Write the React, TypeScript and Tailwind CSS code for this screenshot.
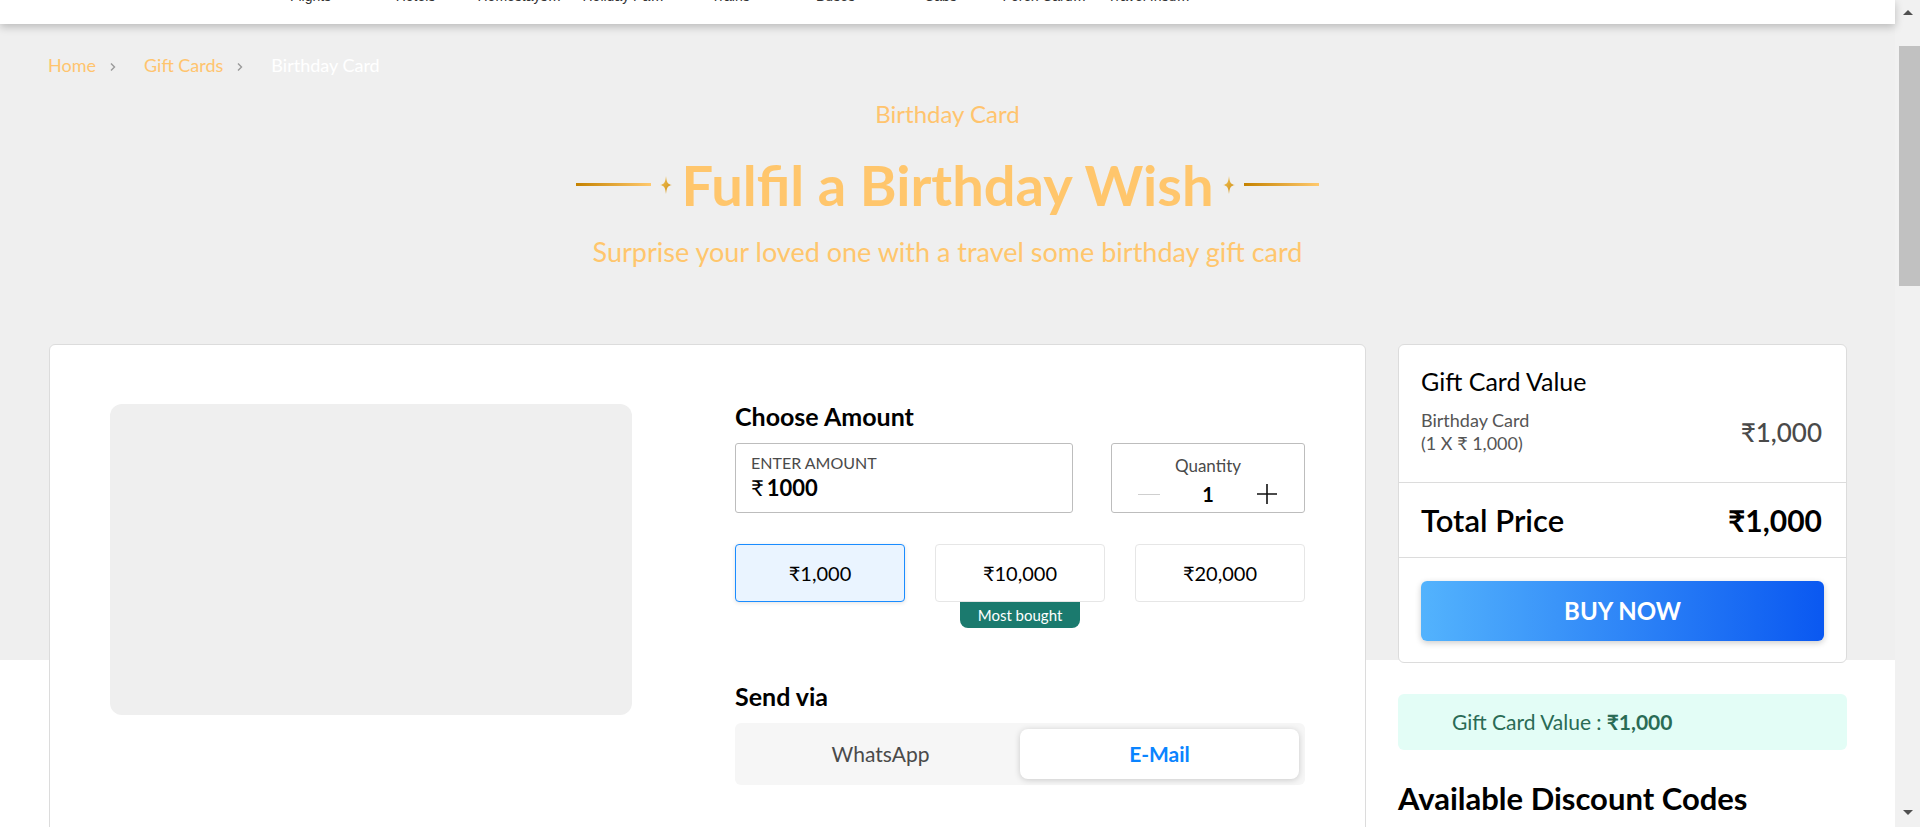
import React from 'react';

const NAV = ['Flights', 'Hotels', 'Homestays & Villas', 'Holiday Packages', 'Trains', 'Buses', 'Cabs', 'Forex Card & Currency', 'Travel Insurance'];

function Star() {
  return (
    <svg width="12" height="18" viewBox="0 0 12 18" aria-hidden>
      <defs>
        <linearGradient id="sg" x1="0" y1="0" x2="1" y2="1">
          <stop offset="0" stopColor="#f7c75a" />
          <stop offset="1" stopColor="#c98a12" />
        </linearGradient>
      </defs>
      <path d="M6 0 C6.6 6 7.5 8.2 12 9 C7.5 9.8 6.6 12 6 18 C5.4 12 4.5 9.8 0 9 C4.5 8.2 5.4 6 6 0 Z" fill="url(#sg)" />
    </svg>
  );
}

function Chevron() {
  return (
    <svg width="8" height="10" viewBox="0 0 8 10" aria-hidden className="mt-[4px]">
      <path d="M2 1.5 L5.5 5 L2 8.5" fill="none" stroke="#9a9a9a" strokeWidth="1.4" />
    </svg>
  );
}

function Scrollbar() {
  return (
    <div className="flex h-full w-[25px] shrink-0 flex-col items-center bg-[#f1f1f1]">
      <div className="mt-[10px] h-0 w-0 border-x-[5px] border-b-[5px] border-x-transparent border-b-[#505050]" />
      <div className="ml-[4px] mt-[31px] h-[240px] w-[21px] bg-[#c1c1c1]" />
      <div className="flex-1" />
      <div className="mb-[12px] h-0 w-0 border-x-[5px] border-t-[5px] border-x-transparent border-t-[#505050]" />
    </div>
  );
}

export default function App() {
  const amounts = ['₹1,000', '₹10,000', '₹20,000'];

  return (
    <div className="flex h-[827px] w-[1920px] overflow-hidden bg-white font-['Lato',sans-serif] text-black">
      <div className="flex w-[1895px] flex-col bg-[linear-gradient(to_bottom,#efefef_0,#efefef_660px,#ffffff_660px)]">
        {/* Top nav, scrolled mostly out of view */}
        <header className="relative z-10 h-[24px] shrink-0 overflow-hidden bg-white shadow-[0_3px_8px_rgba(0,0,0,0.22)]">
          <nav className="-mt-[12px] flex pl-[258px] font-['Liberation_Sans',Arial,sans-serif] text-[14px] leading-[16px] text-[#333]">
            {NAV.map((n) => (
              <div key={n} className="flex w-[105px] justify-center">
                <span className="max-w-[86px] truncate">{n}</span>
              </div>
            ))}
          </nav>
        </header>

        {/* Breadcrumb */}
        <div className="flex items-center pl-[48px] pt-[29px] text-[18px] leading-[24px]">
          <span className="text-[#ffc46e]">Home</span>
          <span className="ml-[13px] mr-[27px] flex"><Chevron /></span>
          <span className="text-[#ffc46e]">Gift Cards</span>
          <span className="ml-[13px] mr-[27px] flex"><Chevron /></span>
          <span className="text-white">Birthday Card</span>
        </div>

        {/* Hero */}
        <div className="flex flex-col items-center">
          <p className="mt-[22px] text-[24px] leading-[30px] text-[#ffc46e]">Birthday Card</p>
          <div className="mt-[22px] flex items-center">
            <div className="h-[3px] w-[75px] bg-[linear-gradient(to_right,#c58200,#ffc96e)]" />
            <span className="ml-[9px] mr-[9px] flex"><Star /></span>
            <h1 className="text-[56px] font-bold leading-[67px] text-[#ffc66c]">Fulfil a Birthday Wish</h1>
            <span className="ml-[9px] mr-[9px] flex"><Star /></span>
            <div className="h-[3px] w-[75px] bg-[linear-gradient(to_right,#c58200,#ffc96e)]" />
          </div>
          <p className="mt-[19px] text-[27px] leading-[30px] text-[#ffc66c]">
            Surprise your loved one with a travel some birthday gift card
          </p>
        </div>

        {/* Content */}
        <div className="mt-[77px] flex items-start gap-[32px] px-[49px]">
          {/* Main card */}
          <div className="flex h-[600px] w-[1317px] shrink-0 rounded-[6px] border border-[#dcdcdc] bg-white p-[60px] pt-[59px]">
            <div className="h-[311px] w-[522px] shrink-0 rounded-[12px] bg-[#efefef]" />
            <div className="ml-auto w-[570px]">
              <h2 className="-mt-[2px] text-[25px] font-bold leading-[28px]">Choose Amount</h2>
              <div className="mt-[13px] flex gap-[38px]">
                <div className="h-[70px] w-[338px] rounded-[3px] border border-[#bdbdbd] pl-[15px] pt-[9px]">
                  <p className="text-[16px] leading-[20px] text-[#4a4a4a]">ENTER AMOUNT</p>
                  <p className="mt-[2px] text-[22px] leading-[26px]">
                    <span className="mr-[3px] font-normal">₹</span>
                    <span className="font-bold">1000</span>
                  </p>
                </div>
                <div className="flex h-[70px] w-[194px] flex-col items-center rounded-[3px] border border-[#bdbdbd] pt-[12px]">
                  <p className="text-[17px] leading-[20px] text-[#4a4a4a]">Quantity</p>
                  <div className="mt-[6px] flex w-full items-center justify-between px-[26px]">
                    <div className="h-px w-[22px] bg-[#cfcfcf]" />
                    <span className="text-[20px] font-bold leading-[24px]">1</span>
                    <svg width="22" height="22" viewBox="0 0 22 22" aria-hidden>
                      <path d="M11 1 V21 M1 11 H21" stroke="#111" strokeWidth="1.6" />
                    </svg>
                  </div>
                </div>
              </div>

              <div className="mt-[31px] grid grid-cols-3 gap-[30px]">
                {amounts.map((a, i) => (
                  <div key={a} className="flex flex-col items-center">
                    <button
                      className={
                        i === 0
                          ? 'flex h-[58px] w-full items-center justify-center rounded-[4px] border border-[#1a8cff] bg-[#eaf4ff] text-[20px] shadow-[0_1px_4px_rgba(0,0,0,0.12)]'
                          : 'flex h-[58px] w-full items-center justify-center rounded-[4px] border border-[#e6e6e6] bg-white text-[20px]'
                      }
                    >
                      {a}
                    </button>
                    {i === 1 ? (
                      <span className="flex h-[26px] w-[120px] items-center justify-center rounded-b-[8px] bg-[#1b7a6e] text-[15px] text-white">
                        Most bought
                      </span>
                    ) : (
                      <span className="h-[26px]" />
                    )}
                  </div>
                ))}
              </div>

              <h2 className="mt-[54px] text-[25px] font-bold leading-[28px]">Send via</h2>
              <div className="mt-[13px] grid h-[62px] grid-cols-2 rounded-[6px] bg-[#f6f6f6] p-[6px]">
                <button className="text-[21px] text-[#4a4a4a]">WhatsApp</button>
                <button className="rounded-[8px] bg-white text-[21px] font-bold text-[#0a84ff] shadow-[0_1px_6px_rgba(0,0,0,0.18)]">
                  E-Mail
                </button>
              </div>
            </div>
          </div>

          {/* Summary column */}
          <div className="w-[449px] shrink-0">
            <div className="rounded-[6px] border border-[#dcdcdc] bg-white">
              <div className="h-[138px] border-b border-[#dcdcdc] pl-[22px] pr-[24px] pt-[21px]">
                <p className="text-[25px] leading-[30px]">Gift Card Value</p>
                <div className="mt-[13px] flex items-center justify-between">
                  <div className="text-[18px] leading-[23px] text-[#555]">
                    <p>Birthday Card</p>
                    <p>(1 X ₹ 1,000)</p>
                  </div>
                  <span className="text-[26px] font-medium text-[#4a4a4a]">₹1,000</span>
                </div>
              </div>
              <div className="flex h-[75px] items-center justify-between border-b border-[#dcdcdc] pl-[22px] pr-[24px]">
                <span className="text-[31px] font-semibold">Total Price</span>
                <span className="text-[30px] font-bold">₹1,000</span>
              </div>
              <div className="px-[22px] pb-[21px] pt-[23px]">
                <button className="h-[60px] w-full rounded-[6px] bg-[linear-gradient(to_right,#53b3fd,#0a58f1)] text-[24px] font-bold text-white shadow-[0_2px_6px_rgba(0,0,0,0.2)]">
                  BUY NOW
                </button>
              </div>
            </div>

            <div className="mt-[31px] flex h-[56px] items-center rounded-[6px] bg-[#e3fdf6] pl-[54px] text-[21px] text-[#2a6b55]">
              Gift Card Value :<span className="ml-[5px] font-bold">₹1,000</span>
            </div>

            <h3 className="mt-[30px] text-[31px] font-bold leading-[36px]">Available Discount Codes</h3>
          </div>
        </div>
      </div>
      <Scrollbar />
    </div>
  );
}
